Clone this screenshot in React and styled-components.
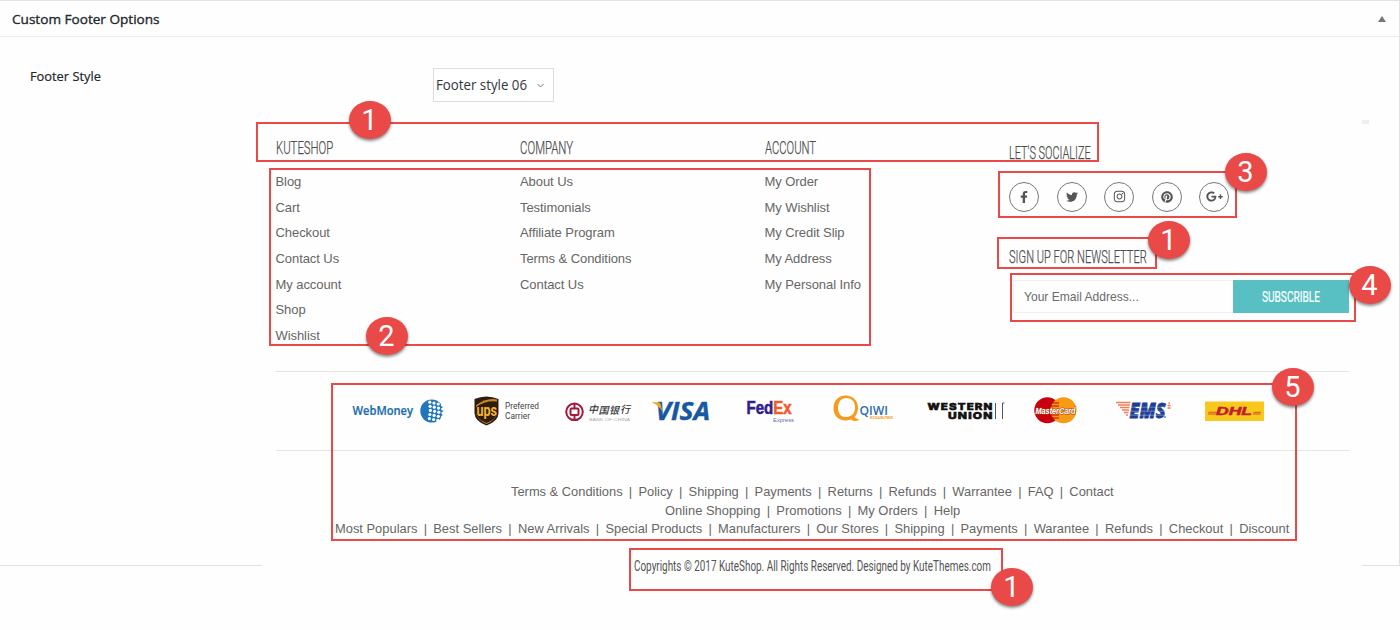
import React, { useLayoutEffect, useRef, useState } from "react";
import styled, { createGlobalStyle } from "styled-components";
import { FaFacebookF, FaTwitter, FaInstagram, FaPinterest, FaGooglePlusG } from "react-icons/fa";

const GlobalStyle = createGlobalStyle`
  * { box-sizing: border-box; }
  body {
    margin: 0;
    background: #fefefe;
    color: #666;
    font-family: "Liberation Sans", Arial, sans-serif;
    font-size: 13px;
    overflow: hidden;
  }
  ul { list-style: none; margin: 0; padding: 0; }
`;

const sans = `"Open Sans", "Noto Sans", sans-serif`;
const narrow = `Roboto, "Liberation Sans", sans-serif`;
const red = "#e94947";

/* Text squeezed or stretched horizontally to a set width */
const FitOuter = styled.span`
  display: inline-block;
  width: ${(p) => p.$w}px;
  white-space: nowrap;
  vertical-align: top;
`;
const FitInner = styled.span`
  display: inline-block;
  transform-origin: 0 50%;
`;
function Fit({ w, children }) {
  const ref = useRef(null);
  const [scale, setScale] = useState(1);
  useLayoutEffect(() => {
    setScale(w / ref.current.offsetWidth);
  }, [w]);
  return (
    <FitOuter $w={w}>
      <FitInner ref={ref} style={{ transform: `scaleX(${scale})` }}>
        {children}
      </FitInner>
    </FitOuter>
  );
}

const Page = styled.div`
  position: relative;
  width: 1400px;
  height: 630px;
`;
const Panel = styled.section`
  height: 566px;
  border: solid #e2e2e2;
  border-width: 1px 1px 1px 0;
`;
const PanelHeader = styled.header`
  display: flex;
  align-items: center;
  justify-content: space-between;
  height: 36px;
  padding: 0 13px 0 12px;
  border-bottom: 1px solid #ebebeb;
`;
const PanelTitle = styled.h2`
  margin: 0;
  color: #23282d;
  font: 500 13.5px/20px ${sans};
  -webkit-text-stroke: 0.35px #23282d;
`;
const Toggle = styled.span`
  border: solid transparent;
  border-width: 0 4px 6px;
  border-bottom-color: #72777c;
`;
const Field = styled.div`
  display: flex;
  height: 83px;
  padding: 31px 0 0 30px;
`;
const FieldLabel = styled.label`
  width: 403px;
  color: #23282d;
  font: 500 13px/16px ${sans};
  -webkit-text-stroke: 0.2px #23282d;
`;
const Select = styled.div`
  display: flex;
  align-items: center;
  justify-content: space-between;
  width: 121px;
  height: 34px;
  padding: 0 8px 0 2px;
  border: 1px solid #ddd;
  background: #fff;
  color: #32373c;
  font: 400 14px/20px ${sans};
`;
const Preview = styled.div`
  width: 1100px;
  height: 492px;
  margin-left: 262px;
  padding: 18px 13px 0 14px;
  background: #fefefe;
`;
const Columns = styled.div`
  display: grid;
  grid-template-columns: 244.5px 244.5px 244.5px 1fr;
  height: 233px;
  margin-left: -0.5px;
`;
const Column = styled.div`
  padding-top: ${(p) => p.$top || 0}px;
`;
const Heading = styled.h3`
  height: 20px;
  margin: 0;
  color: #4c4c4c;
  font: 300 18.5px/20px ${narrow};
  -webkit-text-stroke: 0.25px #4c4c4c;
`;
const Links = styled.ul`
  margin-top: 11px;
  li { height: 25.67px; line-height: 25.67px; letter-spacing: -0.07px; }
`;
const Socials = styled.div`
  display: flex;
  gap: 17.5px;
  margin: 18.7px 0 35.3px;
`;
const SocialLink = styled.a`
  display: flex;
  align-items: center;
  justify-content: center;
  width: 30px;
  height: 30px;
  border: 1px solid #777;
  border-radius: 50%;
  color: #555;
  font-size: ${(p) => p.$size}px;
`;
const Newsletter = styled.form`
  display: flex;
  height: 33px;
  margin: 13px 0 0 4px;
`;
const EmailField = styled.div`
  width: 220px;
  padding-left: 10px;
  border: 1px solid #f0f0f0;
  border-right: 0;
  line-height: 32px;
  color: #6b6b6b;
`;
const Subscribe = styled.div`
  flex: 1;
  background: #58c0c3;
  color: #fff;
  text-align: center;
  font: 400 15px/34px ${narrow};
  -webkit-text-stroke: 0.2px #fff;
`;
const Brands = styled.div`
  display: flex;
  align-items: center;
  height: 80px;
  padding-left: 76px;
  border: solid #e4e4e4;
  border-width: 1px 0;
`;
const Logo = styled.svg`
  flex: none;
  overflow: visible;
  width: ${(p) => p.$w}px;
  height: 40px;
  margin-right: ${(p) => p.$gap}px;
`;
const TagRows = styled.div`
  display: flex;
  flex-direction: column;
  align-items: center;
  margin: 32.3px 1px 0 0;
  line-height: 18.4px;
`;
const Bar = styled.span`
  margin: 0 6.3px;
`;
const Copyright = styled.p`
  margin: 17px 0.5px 0 0;
  text-align: center;
  color: #555;
  font: 400 15px/20px ${narrow};
`;
const Outline = styled.div`
  position: absolute;
  left: ${(p) => p.$x}px;
  top: ${(p) => p.$y}px;
  width: ${(p) => p.$w}px;
  height: ${(p) => p.$h}px;
  border: 2px solid ${red};
`;
const Badge = styled.div`
  position: absolute;
  left: ${(p) => p.$x - 21}px;
  top: ${(p) => p.$y - 19}px;
  width: 42px;
  height: 38px;
  border-radius: 50%;
  background: ${red};
  box-shadow: 0 2px 3px rgba(0, 0, 0, 0.45);
  color: #fff;
  text-align: center;
  text-indent: -1px;
  font: 400 29px/38px Roboto, "Liberation Sans", sans-serif;
`;
const Smudge = styled.i`
  position: absolute;
  left: 1362px;
  top: 120px;
  width: 7px;
  height: 4px;
  background: #eee;
`;

const columns = [
  ["KUTESHOP", 57, ["Blog", "Cart", "Checkout", "Contact Us", "My account", "Shop", "Wishlist"]],
  ["COMPANY", 53, ["About Us", "Testimonials", "Affiliate Program", "Terms & Conditions", "Contact Us"]],
  ["ACCOUNT", 51, ["My Order", "My Wishlist", "My Credit Slip", "My Address", "My Personal Info"]],
];
const socials = [
  [FaFacebookF, 12], [FaTwitter, 12], [FaInstagram, 13], [FaPinterest, 12], [FaGooglePlusG, 17],
];
const tags = [
  [603, ["Terms & Conditions", "Policy", "Shipping", "Payments", "Returns", "Refunds", "Warrantee", "FAQ", "Contact"]],
  [295, ["Online Shopping", "Promotions", "My Orders", "Help"]],
  [954, ["Most Populars", "Best Sellers", "New Arrivals", "Special Products", "Manufacturers", "Our Stores", "Shipping", "Payments", "Warantee", "Refunds", "Checkout", "Discount"]],
];
const outlines = [
  [256, 122, 843, 40], [269, 168, 602, 178], [998, 171, 239, 47], [997, 237, 160, 32],
  [1010, 273, 346, 49], [331, 383, 966, 158], [629, 548, 374, 43],
];
const badges = [
  [1, 370, 120], [2, 387, 336], [3, 1246, 172], [1, 1169, 240], [4, 1370, 285], [5, 1293, 387], [1, 1012, 587],
];

const T = ({ w, children, ...rest }) => (
  <text textLength={w} lengthAdjust="spacingAndGlyphs" {...rest}>{children}</text>
);

function BrandLogos() {
  const dots = [];
  for (let r = 0; r < 5; r++) {
    for (let c = 0; c < 4; c++) {
      dots.push(<circle key={`${r}-${c}`} cx={77.8 + c * 4.2 + r * 0.3 - (r > 2 ? (r - 2) * 0.8 : 0)} cy={11.2 + r * 4.1 + c * 0.9} r="1.6" />);
    }
  }
  return (
    <Brands>
      <Logo $w={92} $gap={30} viewBox="0 0 92 40">
        <T x="0.5" y="24" w="60.500" fontFamily="Open Sans" fontWeight="600" fontSize="12" stroke="#1b6cab" strokeWidth="0.2" fill="#1b6cab">WebMoney</T>
        <circle cx="79.800" cy="20" r="11.500" fill="#1f77bd" />
        <g fill="#fff">{dots}</g>
      </Logo>
      <Logo $w={65} $gap={26} viewBox="0 0 65 40">
        <path d="M0.500 8Q12 3 24.500 8V22Q24.500 30 12.500 34.500Q0.500 30 0.500 22Z" fill="#2e1c10" />
        <path d="M2 14.500Q12 6.500 23 8.500V22Q22 29 12.500 33Q3 29 2 22Z" fill="#c98d1d" />
        <path d="M2 16Q12 9 23 10.500V22Q22 28.500 12.500 32Q3 28.500 2 22Z" fill="#2e1c10" />
        <T x="2.500" y="25" w="20.500" fontFamily="Roboto" fontWeight="700" fontSize="17" fill="#f5b32c">ups</T>
        <T x="31" y="18" w="34" fontFamily="Roboto" fontSize="8.2" fill="#444">Preferred</T>
        <T x="31" y="27.500" w="25" fontFamily="Roboto" fontSize="8.2" fill="#444">Carrier</T>
      </Logo>
      <Logo $w={66} $gap={20} viewBox="0 0 66 40">
        <g fill="none" stroke="#a8183b" strokeWidth="2">
          <circle cx="9.500" cy="20.800" r="8.300" />
          <rect x="5.500" y="17.500" width="8" height="6.500" rx="1" />
          <path d="M9.500 12.500V17.500M9.500 24V29" />
        </g>
        <text x="23 33.500 44 55" y="21.500 22.500 22.500 22" fontFamily="Noto Sans CJK SC" fontStyle="italic" fontWeight="500" fontSize="10" fill="#333">中国银行</text>
        <T x="24" y="29.500" w="41" fontFamily="Liberation Sans" fontSize="4" fill="#aaa">BANK OF CHINA</T>
      </Logo>
      <Logo $w={59} $gap={36} viewBox="0 0 59 40">
        <T x="4.500" y="28.700" w="54.500" fontFamily="Open Sans" fontWeight="700" fontStyle="italic" fontSize="24.500" stroke="#1858a0" strokeWidth="0.4" fill="#1858a0">VISA</T>
        <path d="M0 11.300H7.500Q9 11.300 9.500 13L11.500 21Q8 14 0 11.300Z" fill="#f4a81d" />
      </Logo>
      <Logo $w={49} $gap={38} viewBox="0 0 49 40">
        <T x="0.5" y="22.800" w="45" fontFamily="Liberation Sans" fontWeight="700" fontSize="18.500" strokeWidth="0.6" fill="#31208a" stroke="#31208a">
          Fed<tspan fill="#f15a29" stroke="#f15a29">Ex</tspan>
        </T>
        <T x="27" y="31" w="21" fontFamily="Liberation Sans" fontSize="6" fill="#5a6fb0">Express</T>
      </Logo>
      <Logo $w={61} $gap={33} viewBox="0 0 61 40">
        <path fillRule="evenodd" d="M12.500 4.500C20 4.500 25 9.500 25 17C25 21 23.500 24 21.500 26Q23 28 26.500 28.500Q22 31.500 18 28.500C8 32 .5 26 .5 17.500C.5 10 5 4.500 12.500 4.500ZM13.500 7C8 7 5 11 5 17C5 23 8.500 26.500 13.500 26C19 25.500 22 22 22 16.500C22 10.500 18.500 7 13.500 7Z" fill="#f79b1c" />
        <T x="26.500" y="23.500" w="28.500" fontFamily="Open Sans" fontWeight="600" fontSize="12.500" fill="#2c6cae">QIWI</T>
        <T x="37" y="28.300" w="23" fontFamily="Liberation Sans" fontWeight="700" fontSize="4" fill="#f79b1c">КОШЕЛЕК</T>
      </Logo>
      <Logo $w={78} $gap={29} viewBox="0 0 78 40">
        <g fill="#111" stroke="#111" strokeWidth="0.6" fontFamily="Inter, Liberation Sans" fontWeight="800" letterSpacing="0.9">
          <T x="0.5" y="18.700" w="66" fontSize="9.200">WESTERN</T>
          <T x="21" y="27.800" w="45.500" fontSize="9.200">UNION</T>
        </g>
        <path d="M68.500 12V28M77.500 12H75.500V28" stroke="#555" fill="none" />
      </Logo>
      <Logo $w={43} $gap={39} viewBox="0 0 43 40">
        <circle cx="13.300" cy="19.300" r="13" fill="#c9000e" />
        <circle cx="29.500" cy="19.300" r="13" fill="#f79a14" />
        <path d="M18 12h7M17 15h8M17 24h8M18 27h7" stroke="#c9000e" />
        <T x="1.5" y="22.800" w="40" fontFamily="Liberation Sans" fontStyle="italic" fontWeight="700" fontSize="9" stroke="#a8461a" strokeWidth="1.2" paintOrder="stroke" fill="#fff">MasterCard</T>
      </Logo>
      <Logo $w={55} $gap={34} viewBox="0 0 55 40">
        <path d="M0 11.500H14.500M2 14H14M4 16.500H13.500M6 19H13M8 21.500H12.500M10 24H12" stroke="#ef7f58" strokeWidth="1.7" />
        <T x="13.500" y="26.800" w="36" fontFamily="Open Sans" fontWeight="800" fontStyle="italic" fontSize="21" stroke="#1c3f94" strokeWidth="0.8" fill="#1c3f94">EMS</T>
        <path d="M13 16.200H50M13 20.200H49M13 24.200H48" stroke="#fff" strokeWidth="0.35" />
        <path d="M51.500 17H54.500M51.500 14.500H54.500M52.500 12H54" stroke="#ef7146" strokeWidth="1.4" />
        <circle cx="49" cy="26" r="0.8" fill="#1c3f94" />
      </Logo>
      <Logo $w={59} $gap={0} viewBox="0 0 59 40">
        <rect y="10.500" width="59" height="19.500" fill="#f9c81d" />
        <path d="M3.500 21.300H12M3 23H11M48.500 21.300H56M48 23H55.500" stroke="#c8352b" strokeWidth="0.8" />
        <T x="11" y="23.800" w="36" fontFamily="Liberation Sans" fontWeight="700" fontStyle="italic" fontSize="10.500" stroke="#c01f2e" strokeWidth="0.5" fill="#c01f2e">DHL</T>
      </Logo>
    </Brands>
  );
}

export default function App() {
  return (
    <Page>
      <GlobalStyle />
      <Panel>
        <PanelHeader>
          <PanelTitle><Fit w={148}>Custom Footer Options</Fit></PanelTitle>
          <Toggle />
        </PanelHeader>
        <Field>
          <FieldLabel><Fit w={71}>Footer Style</Fit></FieldLabel>
          <Select>
            <Fit w={91}>Footer style 06</Fit>
            <svg width="9" height="8" viewBox="0 0 9 8" fill="none" stroke="#777">
              <path d="M1.500 3L4.500 6L7.500 3" />
            </svg>
          </Select>
        </Field>
        <Preview>
          <Columns>
            {columns.map(([title, w, items]) => (
              <Column key={title}>
                <Heading><Fit w={w}>{title}</Fit></Heading>
                <Links>{items.map((t) => <li key={t}>{t}</li>)}</Links>
              </Column>
            ))}
            <Column $top={5}>
              <Heading><Fit w={82}>LET'S SOCIALIZE</Fit></Heading>
              <Socials>
                {socials.map(([Icon, size], i) => <SocialLink key={i} $size={size}><Icon /></SocialLink>)}
              </Socials>
              <Heading><Fit w={138}>SIGN UP FOR NEWSLETTER</Fit></Heading>
              <Newsletter>
                <EmailField><Fit w={115}>Your Email Address...</Fit></EmailField>
                <Subscribe><Fit w={58}>SUBSCRIBLE</Fit></Subscribe>
              </Newsletter>
            </Column>
          </Columns>
          <BrandLogos />
          <TagRows>
            {tags.map(([w, items]) => (
              <Fit key={w} w={w}>
                {items.map((t, i) => (
                  <React.Fragment key={t}>{i > 0 && <Bar>|</Bar>}{t}</React.Fragment>
                ))}
              </Fit>
            ))}
          </TagRows>
          <Copyright>
            <Fit w={357}>Copyrights © 2017 KuteShop. All Rights Reserved. Designed by KuteThemes.com</Fit>
          </Copyright>
        </Preview>
      </Panel>
      <Smudge />
      {outlines.map(([x, y, w, h]) => <Outline key={`${x}-${y}`} $x={x} $y={y} $w={w} $h={h} />)}
      {badges.map(([n, x, y]) => <Badge key={`${x}-${y}`} $x={x} $y={y}>{n}</Badge>)}
    </Page>
  );
}
